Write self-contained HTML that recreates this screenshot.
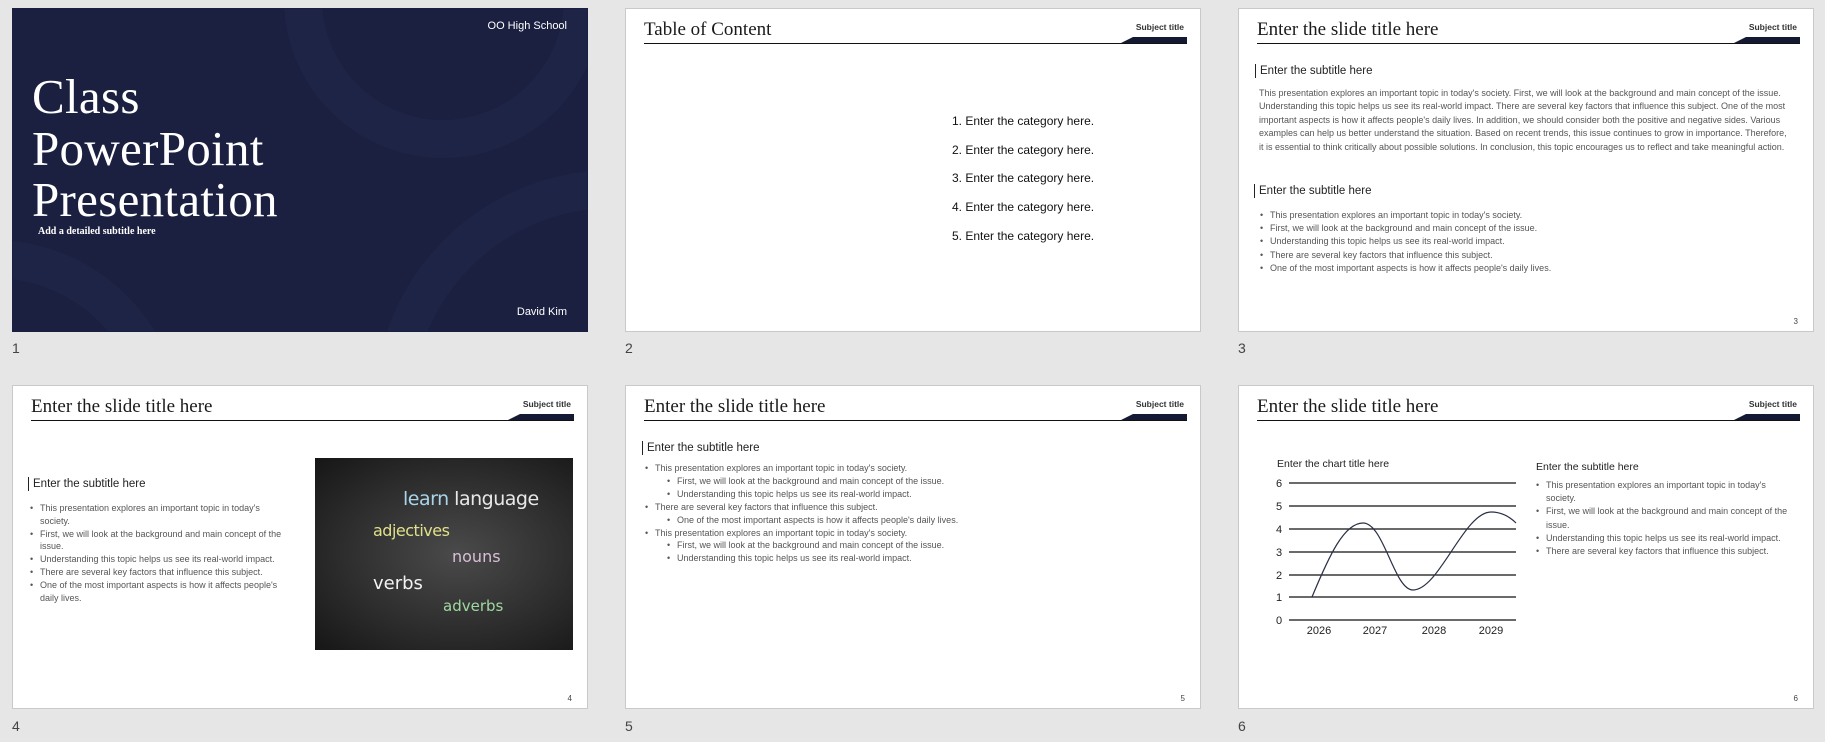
<!DOCTYPE html>
<html><head><meta charset="utf-8"><style>
*{margin:0;padding:0;box-sizing:border-box}
body{width:1825px;height:742px;background:#e6e6e6;position:relative;overflow:hidden;font-family:"Liberation Sans",sans-serif}
.s{position:absolute;width:576px;height:324px;background:#fff;border:1px solid #c9c9c9;overflow:hidden}
.s *{position:absolute}
.n{position:absolute;font-size:14px;color:#444}
.t{left:18px;top:10px;font-family:"Liberation Serif",serif;font-size:19px;color:#1a1a1a;white-space:nowrap}
.ln{left:18px;top:34px;width:543px;height:1px;background:#111}
.sub{right:16px;top:13px;font-size:8.5px;font-weight:bold;color:#333}
.wd{left:495px;top:28px;width:66px;height:6px;background:#141a33;clip-path:polygon(12px 0,100% 0,100% 100%,0 100%)}
.pg{right:15px;top:308px;font-size:8px;color:#444}
.h{font-size:11.5px;color:#222;border-left:1.5px solid #222;padding-left:4px;line-height:14px;white-space:nowrap}
.p{font-size:9px;color:#555;line-height:13.4px}
ul.b{list-style:none;font-size:9px;color:#555;line-height:13.2px}
ul.b li{position:relative;padding-left:12px}
ul.b li:before{content:"•";position:absolute;left:2px;top:0}
ul.b li.l2{padding-left:34px}
ul.b li.l2:before{left:24px}
</style></head><body>

<!-- slide 1 -->
<div class="s" style="left:12px;top:8px;background:#1b2040;border-color:#1b2040">
<svg style="left:0;top:0" width="576" height="324"><g fill="none" stroke="#1e2445" stroke-width="38"><circle cx="430" cy="-10" r="140"/><circle cx="600" cy="400" r="220"/><circle cx="-20" cy="420" r="170"/></g></svg>
<div style="right:20px;top:11px;font-size:11px;color:#fff">OO High School</div>
<div style="left:19px;top:62px;font-family:'Liberation Serif',serif;font-size:49px;line-height:51.5px;color:#fff;letter-spacing:0.3px">Class<br>PowerPoint<br>Presentation</div>
<div style="left:25px;top:217px;font-family:'Liberation Serif',serif;font-size:10px;font-weight:bold;color:#fff">Add a detailed subtitle here</div>
<div style="right:20px;top:297px;font-size:11px;color:#fff">David Kim</div>
</div>
<div class="n" style="left:12px;top:340px">1</div>

<!-- slide 2 -->
<div class="s" style="left:625px;top:8px">
<div class="t">Table of Content</div><div class="ln"></div><div class="sub">Subject title</div><div class="wd"></div>
<div style="left:326px;top:98px;font-size:12px;color:#111;line-height:28.7px;white-space:nowrap">1. Enter the category here.<br>2. Enter the category here.<br>3. Enter the category here.<br>4. Enter the category here.<br>5. Enter the category here.</div>
</div>
<div class="n" style="left:625px;top:340px">2</div>

<!-- slide 3 -->
<div class="s" style="left:1238px;top:8px">
<div class="t">Enter the slide title here</div><div class="ln"></div><div class="sub">Subject title</div><div class="wd"></div>
<div class="h" style="left:16px;top:55px">Enter the subtitle here</div>
<div class="p" style="left:20px;top:78px;width:534px">This presentation explores an important topic in today's society. First, we will look at the background and main concept of the issue. Understanding this topic helps us see its real-world impact. There are several key factors that influence this subject. One of the most important aspects is how it affects people's daily lives. In addition, we should consider both the positive and negative sides. Various examples can help us better understand the situation. Based on recent trends, this issue continues to grow in importance. Therefore, it is essential to think critically about possible solutions. In conclusion, this topic encourages us to reflect and take meaningful action.</div>
<div class="h" style="left:15px;top:175px">Enter the subtitle here</div>
<ul class="b" style="left:19px;top:200px;width:520px"><li>This presentation explores an important topic in today's society.</li><li>First, we will look at the background and main concept of the issue.</li><li>Understanding this topic helps us see its real-world impact.</li><li>There are several key factors that influence this subject.</li><li>One of the most important aspects is how it affects people's daily lives.</li></ul>
<div class="pg">3</div>
</div>
<div class="n" style="left:1238px;top:340px">3</div>

<!-- slide 4 -->
<div class="s" style="left:12px;top:385px">
<div class="t">Enter the slide title here</div><div class="ln"></div><div class="sub">Subject title</div><div class="wd"></div>
<div class="h" style="left:15px;top:91px">Enter the subtitle here</div>
<ul class="b" style="left:15px;top:116px;width:262px;line-height:12.8px"><li>This presentation explores an important topic in today's society.</li><li>First, we will look at the background and main concept of the issue.</li><li>Understanding this topic helps us see its real-world impact.</li><li>There are several key factors that influence this subject.</li><li>One of the most important aspects is how it affects people's daily lives.</li></ul>
<div style="left:302px;top:72px;width:258px;height:192px;background:radial-gradient(ellipse at 55% 50%,#4a4a4a 0%,#2e2e2e 55%,#161616 100%);font-family:'DejaVu Sans',sans-serif;font-size:20px">
<span style="left:88px;top:30px;color:#a9d4ea;font-size:19px;letter-spacing:-0.5px">learn <span style="position:static;color:#e8e8e8">language</span></span>
<span style="left:58px;top:63px;color:#e1e08a;font-size:16px;letter-spacing:-0.5px">adjectives</span>
<span style="left:137px;top:89px;color:#d8bfd8;font-size:16px">nouns</span>
<span style="left:58px;top:115px;color:#f2f2f2;font-size:18px">verbs</span>
<span style="left:128px;top:139px;color:#9fd8a0;font-size:15px">adverbs</span>
</div>
<div class="pg">4</div>
</div>
<div class="n" style="left:12px;top:718px">4</div>

<!-- slide 5 -->
<div class="s" style="left:625px;top:385px">
<div class="t">Enter the slide title here</div><div class="ln"></div><div class="sub">Subject title</div><div class="wd"></div>
<div class="h" style="left:16px;top:55px">Enter the subtitle here</div>
<ul class="b" style="left:17px;top:76px;width:520px;line-height:12.9px"><li>This presentation explores an important topic in today's society.</li><li class="l2">First, we will look at the background and main concept of the issue.</li><li class="l2">Understanding this topic helps us see its real-world impact.</li><li>There are several key factors that influence this subject.</li><li class="l2">One of the most important aspects is how it affects people's daily lives.</li><li>This presentation explores an important topic in today's society.</li><li class="l2">First, we will look at the background and main concept of the issue.</li><li class="l2">Understanding this topic helps us see its real-world impact.</li></ul>
<div class="pg">5</div>
</div>
<div class="n" style="left:625px;top:718px">5</div>

<!-- slide 6 -->
<div class="s" style="left:1238px;top:385px">
<div class="t">Enter the slide title here</div><div class="ln"></div><div class="sub">Subject title</div><div class="wd"></div>
<div style="left:38px;top:72px;font-size:10.5px;color:#222">Enter the chart title here</div>
<svg style="left:0;top:0" width="576" height="324">
<g stroke="#111" stroke-width="1.2">
<line x1="50" y1="97" x2="277" y2="97"/><line x1="50" y1="120" x2="277" y2="120"/><line x1="50" y1="143" x2="277" y2="143"/><line x1="50" y1="166" x2="277" y2="166"/><line x1="50" y1="189" x2="277" y2="189"/><line x1="50" y1="211" x2="277" y2="211"/><line x1="50" y1="234" x2="277" y2="234"/></g>
<g font-family="Liberation Sans" font-size="11" fill="#222" text-anchor="middle">
<text x="40" y="101">6</text><text x="40" y="124">5</text><text x="40" y="147">4</text><text x="40" y="170">3</text><text x="40" y="193">2</text><text x="40" y="215">1</text><text x="40" y="238">0</text>
<text x="80" y="248">2026</text><text x="136" y="248">2027</text><text x="195" y="248">2028</text><text x="252" y="248">2029</text></g>
<path d="M73 211 C90 170,105 137,124 137 C145 137,155 204,174 204 C200 204,225 126,252 126 C262 126,270 130,277 137" fill="none" stroke="#2a2f45" stroke-width="1.2"/>
</svg>
<div style="left:297px;top:75px;font-size:10.5px;color:#222">Enter the subtitle here</div>
<ul class="b" style="left:295px;top:93px;width:258px;line-height:13.2px"><li>This presentation explores an important topic in today's society.</li><li>First, we will look at the background and main concept of the issue.</li><li>Understanding this topic helps us see its real-world impact.</li><li>There are several key factors that influence this subject.</li></ul>
<div class="pg">6</div>
</div>
<div class="n" style="left:1238px;top:718px">6</div>

</body></html>
